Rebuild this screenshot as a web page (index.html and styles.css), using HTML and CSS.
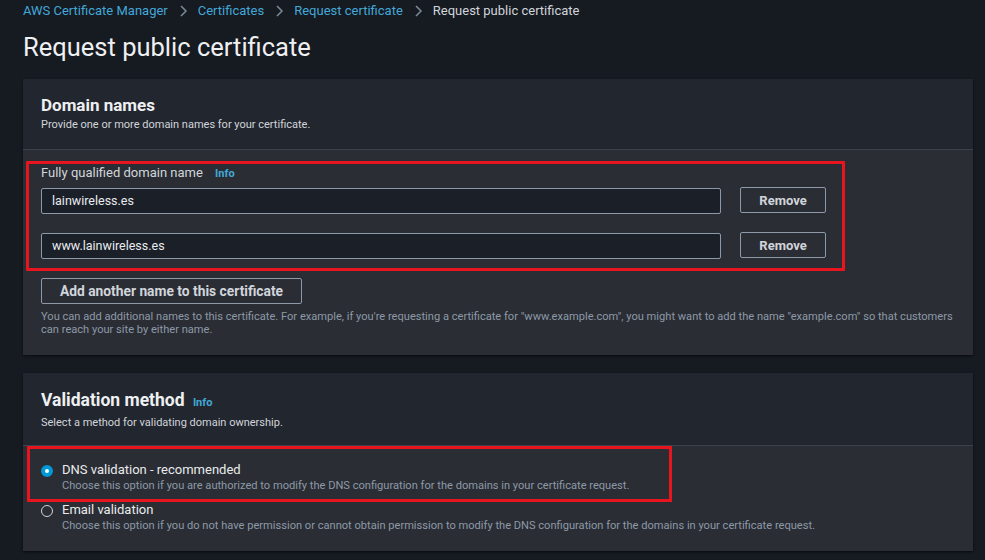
FILE: index.html
```html
<!DOCTYPE html>
<html lang="en">
<head>
<meta charset="utf-8">
<title>Request public certificate</title>
<link rel="stylesheet" href="styles.css">
</head>
<body>
<main class="page">
  <nav class="crumbs">
    <a class="crumb-link">AWS Certificate Manager</a>
    <svg class="chev" viewBox="0 0 10 14" width="10" height="14"><path d="M3 2 L8 7 L3 12" fill="none" stroke="#7d8998" stroke-width="1.5"/></svg>
    <a class="crumb-link">Certificates</a>
    <svg class="chev" viewBox="0 0 10 14" width="10" height="14"><path d="M3 2 L8 7 L3 12" fill="none" stroke="#7d8998" stroke-width="1.5"/></svg>
    <a class="crumb-link">Request certificate</a>
    <svg class="chev" viewBox="0 0 10 14" width="10" height="14"><path d="M3 2 L8 7 L3 12" fill="none" stroke="#7d8998" stroke-width="1.5"/></svg>
    <span class="crumb-current">Request public certificate</span>
  </nav>
  <h1 class="page-title">Request public certificate</h1>

  <section class="panel panel-domains">
    <header class="panel-head">
      <h2 class="panel-title">Domain names</h2>
      <p class="panel-desc">Provide one or more domain names for your certificate.</p>
    </header>
    <div class="panel-body">
      <div class="mark mark-domains">
        <div class="field-label">Fully qualified domain name <a class="info">Info</a></div>
        <div class="row">
          <div class="input">lainwireless.es</div>
          <button class="btn btn-remove">Remove</button>
        </div>
        <div class="row row-second">
          <div class="input">www.lainwireless.es</div>
          <button class="btn btn-remove">Remove</button>
        </div>
      </div>
      <div class="after">
        <button class="btn btn-add">Add another name to this certificate</button>
        <p class="help">You can add additional names to this certificate. For example, if you're requesting a certificate for "www.example.com", you might want to add the name "example.com" so that customers can reach your site by either name.</p>
      </div>
    </div>
  </section>

  <section class="panel panel-validation">
    <header class="panel-head panel-head-v">
      <h2 class="panel-title panel-title-v">Validation method <a class="info">Info</a></h2>
      <p class="panel-desc">Select a method for validating domain ownership.</p>
    </header>
    <div class="panel-body panel-body-v">
      <div class="mark mark-dns">
        <div class="option">
          <span class="radio radio-on"></span>
          <div class="option-text">
            <div class="option-label">DNS validation - recommended</div>
            <div class="option-desc">Choose this option if you are authorized to modify the DNS configuration for the domains in your certificate request.</div>
          </div>
        </div>
      </div>
      <div class="option option-email">
        <span class="radio"></span>
        <div class="option-text">
          <div class="option-label">Email validation</div>
          <div class="option-desc">Choose this option if you do not have permission or cannot obtain permission to modify the DNS configuration for the domains in your certificate request.</div>
        </div>
      </div>
    </div>
  </section>
</main>
</body>
</html>
```

FILE: styles.css
```css
html, body {
  margin: 0;
  padding: 0;
  background: #161a21;
  height: 100%;
  overflow: hidden;
}

.page {
  padding: 0 12px 0 23px;
  font-family: Roboto, "Liberation Sans", sans-serif;
  color: #d1d5db;
}

.crumbs {
  display: flex;
  align-items: center;
  gap: 10px;
  height: 21px;
  font-size: 13px;
}

.crumb-link {
  color: #43a8d8;
}

.crumb-current {
  color: #d1d5db;
}

.chev {
  display: block;
}

.page-title {
  margin: 0;
  font-size: 25.5px;
  font-weight: 400;
  line-height: 30px;
  height: 58px;
  padding-top: 11px;
  box-sizing: border-box;
  color: #eef0f2;
}

.panel {
  width: 950px;
  background: #2a2d33;
  box-shadow: 0 1px 2px rgba(0, 0, 0, 0.6);
}

.panel-domains {
  height: 276px;
}

.panel-validation {
  margin-top: 18px;
  height: 178px;
}

.panel-head {
  background: #22262e;
  border-bottom: 1px solid #3d4149;
  padding: 16px 18px 0;
  height: 71px;
  box-sizing: border-box;
}

.panel-head-v {
  height: 73px;
  padding-top: 17px;
}

.panel-title {
  margin: 0;
  font-size: 17px;
  font-weight: 700;
  line-height: 20px;
  color: #eef0f2;
}

.panel-title-v {
  font-size: 17.5px;
}

.panel-title-v .info {
  margin-left: 4px;
}

.panel-desc {
  margin: 2px 0 0;
  font-size: 11px;
  line-height: 16px;
  color: #d1d5db;
}

.info {
  color: #43a8d8;
  font-size: 11px;
  font-weight: 700;
  margin-left: 7px;
}

.panel-body {
  padding: 11px 0 0 3px;
}

.mark {
  border: 3px solid #e8151f;
}

.mark-domains {
  width: 801px;
  height: 104px;
  padding: 0 0 0 12px;
}

.field-label {
  font-size: 13px;
  line-height: 16px;
  padding-top: 1px;
  color: #d1d5db;
}

.field-label .info {
  margin-left: 9px;
}

.row {
  display: flex;
  align-items: center;
  gap: 19px;
  margin-top: 6px;
}

.row-second {
  margin-top: 19px;
}

.input {
  width: 680px;
  height: 26px;
  box-sizing: border-box;
  background: #1a1f28;
  border: 1px solid #8d99a8;
  border-radius: 2px;
  color: #e9ebed;
  font-size: 12.5px;
  line-height: 24px;
  padding-left: 10px;
}

.btn {
  background: transparent;
  border: 1px solid #8d99a8;
  border-radius: 2px;
  color: #d1d5db;
  font-family: Roboto, "Liberation Sans", sans-serif;
  font-weight: 700;
  font-size: 13px;
  height: 26px;
  padding: 0;
  margin: 0;
}

.btn-remove {
  width: 86px;
  position: relative;
  top: -1px;
}

.after {
  padding-left: 15px;
  padding-top: 7px;
}

.btn-add {
  width: 261px;
  font-size: 13.8px;
}

.help {
  margin: 6px 0 0;
  font-size: 11.1px;
  line-height: 13px;
  color: #8d99a8;
  width: 932px;
}

.panel-body-v {
  padding: 0 0 0 4px;
}

.mark-dns {
  width: 628px;
  height: 50px;
  padding: 0 0 0 11px;
}

.option {
  display: flex;
  align-items: flex-start;
  gap: 9px;
}

.mark-dns .option {
  padding-top: 13px;
}

.option-email {
  padding-left: 14px;
  margin-top: 0;
}

.radio {
  width: 10px;
  height: 10px;
  border: 1px solid #d1d5db;
  border-radius: 50%;
  margin-top: 3px;
  flex: none;
  box-sizing: content-box;
}

.radio-on {
  width: 4px;
  height: 4px;
  border: 4px solid #0099d6;
  background: #ffffff;
}

.option-label {
  font-size: 13px;
  line-height: 16px;
  color: #e9ebed;
}

.option-desc {
  font-size: 11.1px;
  line-height: 15px;
  color: #8d99a8;
}
```
